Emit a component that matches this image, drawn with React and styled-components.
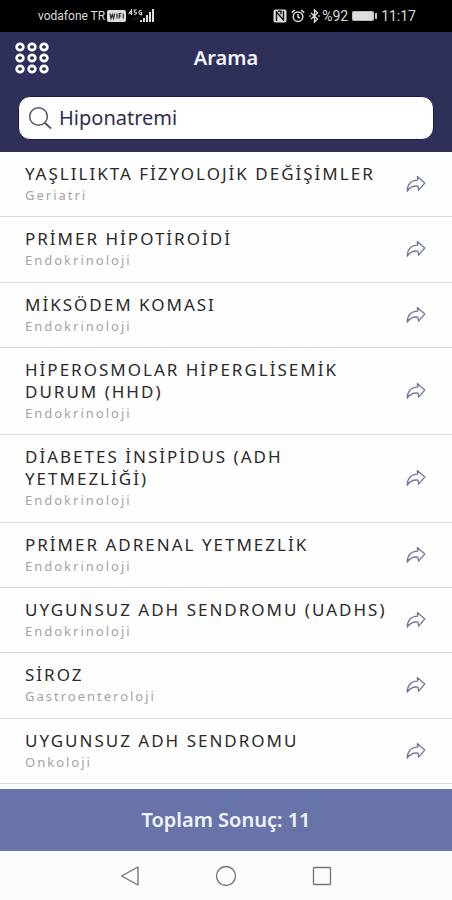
import React from "react";
import styled, { createGlobalStyle } from "styled-components";

const GlobalStyle = createGlobalStyle`
  *, *::before, *::after { box-sizing: border-box; }
  body {
    margin: 0;
    background: #fefefe;
    font-family: "Noto Sans", "Open Sans", sans-serif;
  }
  button { font: inherit; padding: 0; border: 0; background: none; cursor: pointer; }
  svg { display: block; }
`;

const Screen = styled.div`
  display: flex;
  flex-direction: column;
  min-height: 100vh;
`;

const StatusBar = styled.div`
  display: flex;
  align-items: center;
  justify-content: space-between;
  height: 32px;
  padding: 0 36px 0 38px;
  background: #000;
  color: #dcdcdc;
  font-family: Roboto, sans-serif;
`;

const StatusGroup = styled.div`
  display: flex;
  align-items: center;
  gap: ${(p) => p.$gap}px;
`;

const Carrier = styled.span`
  font-size: 12px;
  line-height: 16px;
`;

const StatusValue = styled.span`
  font-size: 14px;
  line-height: 16px;
`;

const Header = styled.header`
  padding: 8px 18px 12px;
  background: #2f3059;
`;

const TitleBar = styled.div`
  display: grid;
  grid-template-columns: 36px 1fr 36px;
  align-items: center;
  height: 36px;
  margin: 0 -4px 20px;
`;

const MenuButton = styled.button`
  display: grid;
  place-items: center;
  height: 36px;
`;

const PageTitle = styled.h1`
  margin: 0;
  color: #f3f4fb;
  font-size: 20px;
  font-weight: 600;
  line-height: 28px;
  text-align: center;
`;

const SearchField = styled.label`
  display: flex;
  align-items: center;
  gap: 6px;
  height: 44px;
  padding: 0 10px 0 9px;
  border: 1px solid #17174a;
  border-radius: 12px;
  background: #fff;
`;

const SearchInput = styled.input`
  flex: 1;
  min-width: 0;
  padding: 0;
  border: 0;
  outline: 0;
  background: transparent;
  color: #2d2e50;
  font: 400 20px/28px "Noto Sans", "Open Sans", sans-serif;
`;

const Results = styled.ul`
  flex: 1;
  display: flex;
  flex-direction: column;
  margin: 0;
  padding: 0 0 5px;
  list-style: none;
  background: #fefefe;
`;

const Row = styled.li`
  flex: 1 0 auto;
  display: flex;
  align-items: center;
  justify-content: space-between;
  padding: 11px 24px 11px 25px;
  border-bottom: 1px solid #dedede;
`;

const RowText = styled.div`
  flex: 1;
  max-width: 368px;
`;

const Topic = styled.h2`
  margin: 0;
  color: #2a2a2a;
  font-size: 17px;
  font-weight: 400;
  line-height: 22px;
  letter-spacing: 2px;
`;

const Branch = styled.p`
  margin: 0;
  color: #a3a3a3;
  font-size: 13px;
  line-height: 20px;
  letter-spacing: 2px;
`;

const ShareButton = styled.button`
  display: grid;
  place-items: center;
  width: 24px;
  height: 24px;
`;

const Total = styled.footer`
  display: grid;
  place-items: center;
  height: 62px;
  background: #6874a9;
  color: #f0f4fd;
  font-size: 20px;
  font-weight: 600;
  line-height: 28px;
`;

const SystemNav = styled.nav`
  display: flex;
  align-items: center;
  justify-content: center;
  gap: 72px;
  height: 49px;
  background: #fcfcfc;
`;

const NavButton = styled.button`
  display: grid;
  place-items: center;
  width: 24px;
  height: 24px;
`;

const results = [
  { topic: "YAŞLILIKTA FİZYOLOJİK DEĞİŞİMLER", branch: "Geriatri" },
  { topic: "PRİMER HİPOTİROİDİ", branch: "Endokrinoloji" },
  { topic: "MİKSÖDEM KOMASI", branch: "Endokrinoloji" },
  { topic: "HİPEROSMOLAR HİPERGLİSEMİK DURUM (HHD)", branch: "Endokrinoloji" },
  { topic: "DİABETES İNSİPİDUS (ADH YETMEZLİĞİ)", branch: "Endokrinoloji" },
  { topic: "PRİMER ADRENAL YETMEZLİK", branch: "Endokrinoloji" },
  { topic: "UYGUNSUZ ADH SENDROMU (UADHS)", branch: "Endokrinoloji" },
  { topic: "SİROZ", branch: "Gastroenteroloji" },
  { topic: "UYGUNSUZ ADH SENDROMU", branch: "Onkoloji" },
];

const WifiBadge = () => (
  <svg width="19" height="12" viewBox="0 0 19 12" aria-hidden="true">
    <rect width="19" height="12" rx="2" fill="#dcdcdc" />
    <path
      d="M3 3.5l1 5 1.3-4 1.3 4 1-5M10 3.5v5M12.2 8.5v-5h2.2M12.2 6h2M16.3 3.5v5"
      fill="none"
      stroke="#222"
      strokeWidth="1.1"
    />
  </svg>
);

const Signal = () => (
  <svg width="27" height="14" viewBox="0 0 27 14" aria-hidden="true">
    <g fill="none" stroke="#dcdcdc" strokeWidth="1.1">
      <path d="M3.5 6V1L1 4.3h3.5M8.5 1H6.3v2.1c2.8-.4 2.8 2.6 0 2.3M13.5 1.4c-3-1-3.4 4.2-.8 4.2h1V3.5h-1.4" />
    </g>
    <path d="M6 10h1M9 10h1" stroke="#777" />
    <path d="M12 11h2v2h-2zM15 9h2v4h-2zM18 6h2v7h-2zM21 3h2v10h-2zM24 0h2v13h-2z" fill="#dcdcdc" />
  </svg>
);

const NfcIcon = () => (
  <svg width="14" height="14" viewBox="0 0 14 14" aria-hidden="true">
    <rect x=".5" y=".5" width="13" height="13" rx="2" fill="#dcdcdc" />
    <path d="M3.5 2v10M3.5 3l7 8M10.5 2v10M5 2.2h3v3" fill="none" stroke="#111" strokeWidth="1.4" />
  </svg>
);

const AlarmIcon = () => (
  <svg width="14" height="14" viewBox="0 0 14 14" fill="none" stroke="#dcdcdc" strokeWidth="1.5" aria-hidden="true">
    <circle cx="7" cy="7.7" r="4.8" />
    <path d="M7 5v3l2 1M.8 3.6l3-2.6M13.2 3.6l-3-2.6" />
  </svg>
);

const BluetoothIcon = () => (
  <svg width="11" height="14" viewBox="0 0 11 14" fill="none" stroke="#dcdcdc" strokeWidth="1.4" aria-hidden="true">
    <path d="M2 4l6.5 6L5.5 13V1l3 3L2 10M.3 7h1.4M9.3 7h1.4" />
  </svg>
);

const BatteryIcon = () => (
  <svg width="25" height="10" viewBox="0 0 25 10" aria-hidden="true">
    <rect x=".5" y=".5" width="21" height="9" rx="1" fill="#dcdcdc" stroke="#bbb" />
    <rect x="23" y="2" width="2" height="6" fill="#c4c4c4" />
  </svg>
);

const GridIcon = () => (
  <svg width="34" height="32" viewBox="0 0 34 32" fill="none" stroke="#fff" strokeWidth="2.6" aria-hidden="true">
    {[5, 16, 27].map((y) =>
      [5, 17, 29].map((x) => <ellipse key={`${x}-${y}`} cx={x} cy={y} rx="3.4" ry="3.1" />)
    )}
  </svg>
);

const SearchIcon = () => (
  <svg width="25" height="24" viewBox="0 0 25 24" fill="none" stroke="#55555f" strokeWidth="1.5" aria-hidden="true">
    <circle cx="10.5" cy="10.5" r="8.8" />
    <path d="M17 17l6 5.5" strokeWidth="1.9" />
  </svg>
);

const ShareIcon = () => (
  <svg width="20" height="18" viewBox="0 0 20 18" fill="none" stroke="#737896" strokeWidth="1.3" strokeLinejoin="round" aria-hidden="true">
    <path d="M11.3 1.6L18.8 8l-6.2 7.2-.6-4.1C7 10.600 3.600 12.300 1.300 16.200 1 10 4.600 5.400 11.700 5.200z" />
  </svg>
);

export default function App() {
  return (
    <Screen lang="tr">
      <GlobalStyle />
      <StatusBar>
        <StatusGroup $gap={2}>
          <Carrier>vodafone TR</Carrier>
          <WifiBadge />
          <Signal />
        </StatusGroup>
        <StatusGroup $gap={4}>
          <NfcIcon />
          <AlarmIcon />
          <StatusGroup $gap={2}>
            <BluetoothIcon />
            <StatusValue>%92</StatusValue>
          </StatusGroup>
          <BatteryIcon />
          <StatusValue>11:17</StatusValue>
        </StatusGroup>
      </StatusBar>
      <Header>
        <TitleBar>
          <MenuButton type="button" aria-label="Menü">
            <GridIcon />
          </MenuButton>
          <PageTitle>Arama</PageTitle>
        </TitleBar>
        <SearchField>
          <SearchIcon />
          <SearchInput type="text" aria-label="Arama" defaultValue="Hiponatremi" />
        </SearchField>
      </Header>
      <Results>
        {results.map(({ topic, branch }) => (
          <Row key={topic}>
            <RowText>
              <Topic>{topic}</Topic>
              <Branch>{branch}</Branch>
            </RowText>
            <ShareButton type="button" aria-label={`Paylaş: ${topic}`}>
              <ShareIcon />
            </ShareButton>
          </Row>
        ))}
      </Results>
      <Total>Toplam Sonuç: 11</Total>
      <SystemNav aria-label="Sistem">
        <NavButton type="button" aria-label="Geri">
          <svg width="20" height="20" viewBox="0 0 20 20" fill="none" stroke="#707070" strokeWidth="1.3">
            <path d="M1.5 10L18 1v18z" strokeLinejoin="round" />
          </svg>
        </NavButton>
        <NavButton type="button" aria-label="Ana ekran">
          <svg width="22" height="22" viewBox="0 0 22 22" fill="none" stroke="#707070" strokeWidth="1.3">
            <circle cx="11" cy="11" r="9.5" />
          </svg>
        </NavButton>
        <NavButton type="button" aria-label="Son uygulamalar">
          <svg width="20" height="20" viewBox="0 0 20 20" fill="none" stroke="#707070" strokeWidth="1.3">
            <rect x="1.5" y="1.5" width="17" height="17" rx="1" />
          </svg>
        </NavButton>
      </SystemNav>
    </Screen>
  );
}
